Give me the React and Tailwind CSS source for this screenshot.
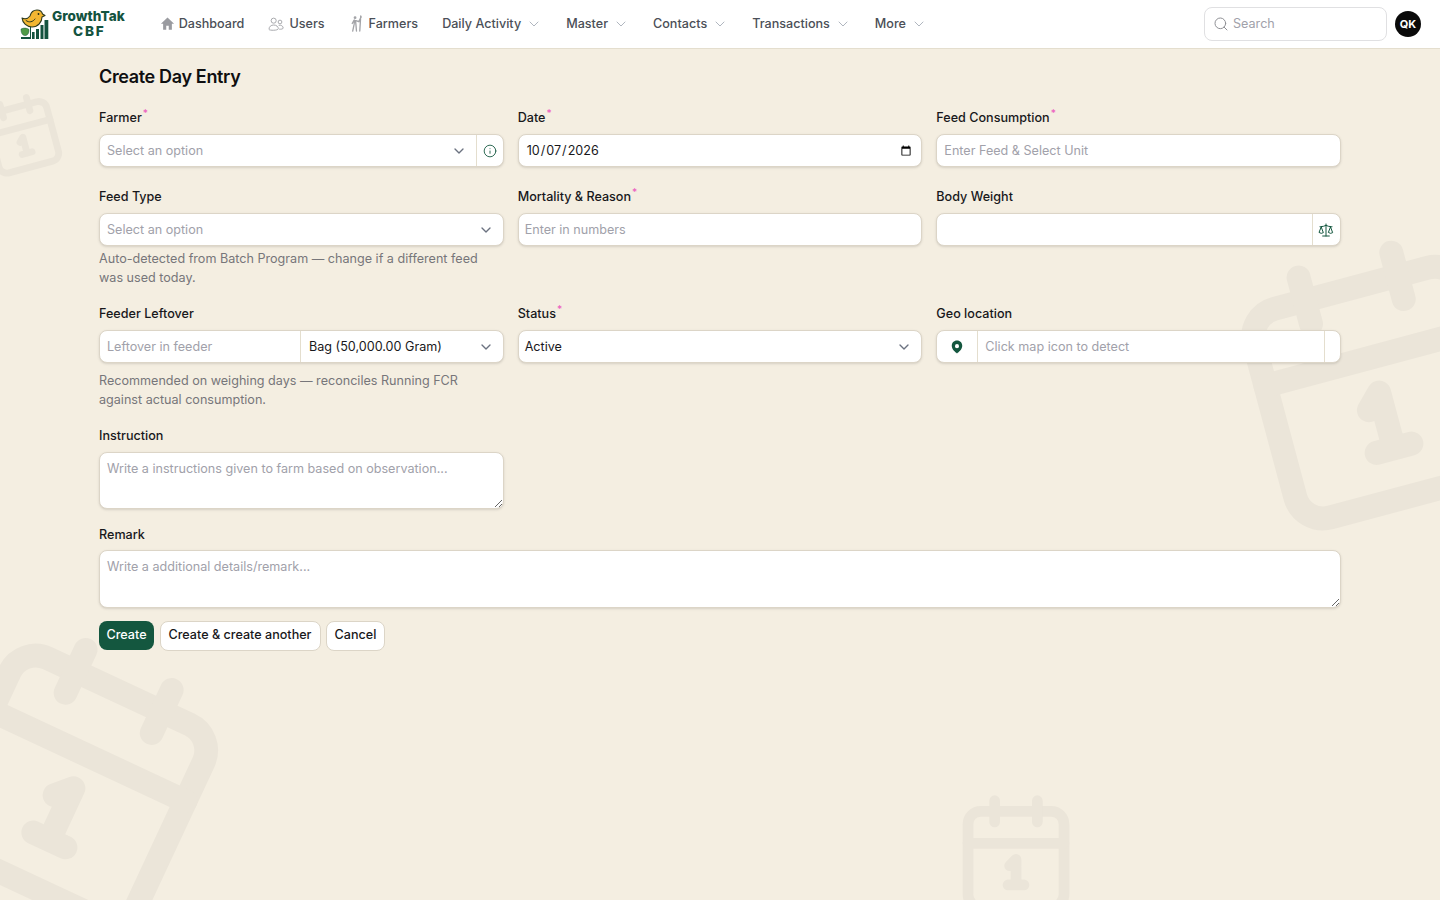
import React from "react";
import { ChevronDown, Search, Scale, Info } from "lucide-react";

function Cal({ className }) {
  return (
    <svg viewBox="0 0 24 24" fill="none" stroke="#ebe5d9" strokeWidth="2" strokeLinecap="round" strokeLinejoin="round" className={className}>
      <rect x="3" y="4" width="18" height="18" rx="2.4" />
      <path d="M8 2v4M16 2v4M3 10h18" />
      <path d="M10.800 14.200 12 13v4.800M10.500 17.800h3" />
    </svg>
  );
}

function Logo() {
  return (
    <svg width="29" height="31" viewBox="0 0 29 31" className="shrink-0">
      <rect x="10" y="16" width="1" height="13" fill="#14533f" />
      <rect x="12" y="23" width="2.600" height="7" fill="#14533f" />
      <rect x="16" y="20" width="3" height="10" fill="#14533f" />
      <rect x="20.500" y="16" width="3" height="14" fill="#14533f" />
      <rect x="24.500" y="11" width="3.800" height="19" fill="#14533f" />
      <path d="M2 9C5 10.500 8 9.500 10 7 11 3 14 1 17 1c3 0 5 2 5.500 4L25 6.500 22 8c0 5-4 10-10 10C7 18 2.500 14 2 9z" fill="#f2b632" stroke="#2e3a1f" strokeWidth="1.100" strokeLinejoin="round" />
      <path d="M6 11.500c3 2.500 7 1.500 9-1.500" fill="none" stroke="#2e3a1f" strokeWidth="1" strokeLinecap="round" />
      <circle cx="18.500" cy="5" r="0.900" fill="#1f2a16" />
      <path d="M1 20c3-1.500 6-1 8 .5 0 3.500-1 6-4 6-3 0-4-3-4-6.500z" fill="#4f9a47" stroke="#14533f" strokeWidth="0.500" />
      <rect x="1" y="28" width="10" height="2" fill="#14533f" />
    </svg>
  );
}

function NavItem({ icon, label, caret }) {
  return (
    <div className="flex items-center">
      {icon}
      <span className="text-[12.600px] font-medium text-[#4b4f57]">{label}</span>
      {caret && <ChevronDown size={16} strokeWidth={1.2} className="ml-[5px] text-[#9ca3af]" />}
    </div>
  );
}

function Label({ children, req }) {
  return (
    <label className="mb-[7px] block h-5 text-[12.600px] leading-[22px] font-medium text-[#18181b]">
      {children}
      {req && <sup className="ml-[1px] text-[10px] font-medium text-[#ec5fbf]">*</sup>}
    </label>
  );
}

const box = "flex h-[33px] items-center rounded-lg border border-[#dcd5c7] bg-white shadow-sm overflow-hidden";
const inp = "min-w-0 bg-transparent text-[12.600px] text-[#18181b] outline-none placeholder:text-[#a1a1aa]";
const line = `${inp} pt-[1px]`;

function Caret({ className = "" }) {
  return <ChevronDown size={16} strokeWidth={2} className={`shrink-0 text-[#6b7280] ${className}`} />;
}

function Hint({ children, className = "" }) {
  return <p className={`text-[12.600px] leading-[19px] text-[#77767a] ${className}`}>{children}</p>;
}

export default function App() {
  return (
    <div className="relative h-[900px] overflow-hidden bg-[#f4eee1] font-['Inter',sans-serif]">
      <Cal className="absolute left-[-19px] top-[93px] h-[82px] w-[82px] -rotate-[15deg]" />
      <Cal className="absolute left-[-64px] top-[635px] h-[285px] w-[285px] rotate-[25deg]" />
      <Cal className="absolute left-[1232px] top-[237px] h-[288px] w-[288px] -rotate-[15deg]" />
      <Cal className="absolute left-[952px] top-[790px] h-[128px] w-[128px]" />

      <header className="relative flex h-[49px] items-center border-b border-[#e4dece] bg-white pl-5 pr-[19px]">
        <div className="flex items-center gap-[3px]">
          <Logo />
          <div className="flex flex-col items-center font-extrabold leading-[15px] text-[#14533f]">
            <span className="text-[13.600px]">GrowthTak</span>
            <span className="pl-[2px] text-[13.600px] tracking-[1.800px]">CBF</span>
          </div>
        </div>
        <nav className="ml-[35px] flex items-center gap-[24px]">
          <NavItem
            label="Dashboard"
            icon={
              <svg width="15" height="15" viewBox="0 0 24 24" className="mr-[4px]" fill="#9a9ba0">
                <path d="M12 2.500 1.500 12.500H5V22h5v-6.500h4V22h5v-9.500h3.500z" />
              </svg>
            }
          />
          <NavItem
            label="Users"
            icon={
              <svg width="16" height="16" viewBox="0 0 24 24" className="mr-[5px]" fill="none" stroke="#a3a4a8" strokeWidth="1.400">
                <circle cx="8.500" cy="7" r="3.800" />
                <circle cx="18" cy="9" r="2.800" />
                <path d="M1.500 20c0-4 3-6.500 7-6.500s7 2.500 7 5.500-14 3-14 1z" />
                <path d="M16 14c3.500-.8 6.800 1 6.800 4 0 1.500-3 2-6 1.800" />
              </svg>
            }
          />
          <NavItem
            label="Farmers"
            icon={
              <svg width="14" height="17" viewBox="0 0 14 18" className="mr-[6px]" fill="none" stroke="#a3a4a8" strokeWidth="1.400" strokeLinecap="round">
                <circle cx="6" cy="2.800" r="1.500" fill="#a3a4a8" stroke="none" />
                <path d="M5.500 5.500 5 10l-1.500 7M6.500 6l.5 5 .5 6M3 9l2-3.500M7 6l3 1 2.500-5M12 1l-1 16" />
              </svg>
            }
          />
          <NavItem label="Daily Activity" caret />
          <NavItem label="Master" caret />
          <NavItem label="Contacts" caret />
          <NavItem label="Transactions" caret />
          <NavItem label="More" caret />
        </nav>
        <div className="ml-auto flex items-center gap-2">
          <div className="flex h-[34px] w-[183px] items-center rounded-lg border border-[#e0e0e2] bg-white pl-[8px]">
            <Search size={16} strokeWidth={1.500} className="mr-[4px] shrink-0 text-[#8f9095]" />
            <input placeholder="Search" className={`${inp} w-full`} />
          </div>
          <div className="flex h-[26px] w-[26px] items-center justify-center rounded-full bg-[#0a0a0a] text-[11px] font-bold text-white">QK</div>
        </div>
      </header>

      <main className="relative mx-auto w-[1242px]">
        <h1 className="pt-[17px] text-[18px] leading-[22px] font-semibold tracking-[-0.350px] text-[#0f0f10]">Create Day Entry</h1>

        <div className="mt-[19px] grid grid-cols-3 gap-x-[14px]">
          <div className="mb-[19px]">
            <Label req>Farmer</Label>
            <div className={box}>
              <span className="flex-1 pl-[7px] pt-[1px] text-[12.600px] text-[#a1a1aa]">Select an option</span>
              <Caret className="mr-[9px]" />
              <div className="flex h-full w-[27px] items-center justify-center border-l border-[#e4dece]">
                <Info size={14} strokeWidth={1.500} className="text-[#14573f]" />
              </div>
            </div>
          </div>
          <div className="mb-[19px]">
            <Label req>Date</Label>
            <div className={box}>
              <input type="date" defaultValue="2026-10-07" className={`${line} w-full pl-[7px] pr-[7px]`} />
            </div>
          </div>
          <div className="mb-[19px]">
            <Label req>Feed Consumption</Label>
            <div className={box}>
              <input placeholder="Enter Feed & Select Unit" className={`${line} w-full px-[7px]`} />
            </div>
          </div>

          <div className="mb-[16px]">
            <Label>Feed Type</Label>
            <div className={box}>
              <span className="flex-1 pl-[7px] pt-[1px] text-[12.600px] text-[#a1a1aa]">Select an option</span>
              <Caret className="mr-[9px]" />
            </div>
            <Hint className="mt-[3px]">Auto-detected from Batch Program — change if a different feed was used today.</Hint>
          </div>
          <div>
            <Label req>Mortality &amp; Reason</Label>
            <div className={box}>
              <input placeholder="Enter in numbers" className={`${line} w-full px-[6px]`} />
            </div>
          </div>
          <div>
            <Label>Body Weight</Label>
            <div className={box}>
              <input className={`${line} w-full px-[7px]`} />
              <div className="flex h-full w-[28px] shrink-0 items-center justify-center border-l border-[#e4dece]">
                <Scale size={16} strokeWidth={1.500} className="text-[#14573f]" />
              </div>
            </div>
          </div>

          <div className="mb-[16px]">
            <Label>Feeder Leftover</Label>
            <div className={box}>
              <input placeholder="Leftover in feeder" className={`${line} w-[200px] shrink-0 px-[7px]`} />
              <div className="flex h-full flex-1 items-center border-l border-[#e4dece] pl-2">
                <span className="flex-1 pt-[1px] text-[12.600px] text-[#18181b]">Bag (50,000.00 Gram)</span>
                <Caret className="mr-[9px]" />
              </div>
            </div>
            <Hint className="mt-2">Recommended on weighing days — reconciles Running FCR against actual consumption.</Hint>
          </div>
          <div>
            <Label req>Status</Label>
            <div className={box}>
              <span className="flex-1 pl-[6px] pt-[1px] text-[12.600px] text-[#18181b]">Active</span>
              <Caret className="mr-[9px]" />
            </div>
          </div>
          <div>
            <Label>Geo location</Label>
            <div className={box}>
              <div className="flex h-full w-[41px] shrink-0 items-center justify-center border-r border-[#e4dece]">
                <svg width="14" height="14" viewBox="0 0 24 24" fill="#14573f">
                  <path fillRule="evenodd" d="M12 1C6.500 1 3 5 3 10c0 6 6 11 9 13 3-2 9-7 9-13 0-5-3.500-9-9-9zm0 6a3.500 3.500 0 1 1 0 7 3.500 3.500 0 0 1 0-7z" />
                </svg>
              </div>
              <input placeholder="Click map icon to detect" className={`${line} flex-1 px-[7px]`} />
              <div className="h-full w-[16px] shrink-0 border-l border-[#e4dece]" />
            </div>
          </div>

          <div className="mb-[15px]">
            <Label>Instruction</Label>
            <textarea placeholder="Write a instructions given to farm based on observation..." className={`${inp} block h-[57px] w-full rounded-lg border border-[#dcd5c7] bg-white px-[7px] py-[7px] shadow-sm`} />
          </div>
        </div>

        <div>
          <label className="mb-[6px] block h-5 text-[12.600px] leading-[22px] font-medium text-[#18181b]">Remark</label>
          <textarea placeholder="Write a additional details/remark..." className={`${inp} block h-[58px] w-full rounded-lg border border-[#dcd5c7] bg-white px-[7px] py-[7px] shadow-sm`} />
        </div>

        <div className="mt-[13px] flex items-start gap-[5.500px]">
          <button className="h-[29px] w-[55px] rounded-lg bg-[#14573f] text-[12.600px] font-medium text-white">Create</button>
          <button className="h-[30px] w-[161px] rounded-lg border border-[#dcd5c7] bg-white pb-[1px] text-[12.600px] font-medium text-[#18181b]">Create &amp; create another</button>
          <button className="h-[30px] w-[59px] rounded-lg border border-[#dcd5c7] bg-white pb-[1px] text-[12.600px] font-medium text-[#18181b]">Cancel</button>
        </div>
      </main>
    </div>
  );
}
